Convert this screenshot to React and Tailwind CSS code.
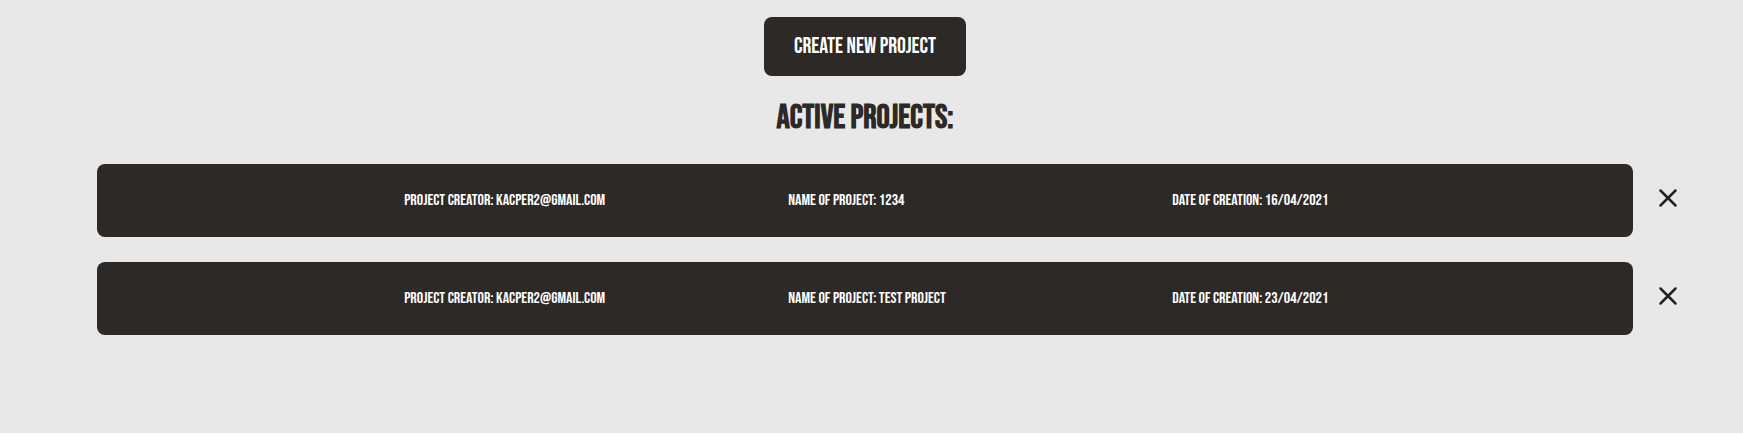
import { X } from "lucide-react";

const projects = [
  { creator: "kacper2@gmail.com", name: "1234", date: "16/04/2021" },
  { creator: "kacper2@gmail.com", name: "test project", date: "23/04/2021" },
];

function ProjectRow({ creator, name, date }) {
  return (
    <li className="flex items-center gap-5">
      <button
        type="button"
        className="grid min-w-0 flex-1 grid-cols-[4fr_5fr_5fr_6fr] items-center rounded-lg bg-[#2d2926] py-6 text-left text-base leading-[25px] text-white uppercase"
      >
        <span className="col-start-2">Project creator: {creator}</span>
        <span>Name of project: {name}</span>
        <span>Date of creation: {date}</span>
      </button>
      <button type="button" aria-label={`Delete project ${name}`} className="pb-[5px] text-[#222222]">
        <X className="size-[30px]" strokeWidth={2} />
      </button>
    </li>
  );
}

export default function App() {
  return (
    <main className="flex min-h-screen flex-col items-center border-b border-white bg-[#e8e8e8] pt-[17px] pr-[60px] pl-[97px] font-['Bebas_Neue',sans-serif]">
      <div className="flex w-full flex-col items-center pr-[50px]">
        <button
          type="button"
          className="rounded-lg bg-[#2d2926] px-[30px] py-4 text-[22px] leading-[27px] text-white uppercase"
        >
          Create new project
        </button>
        <h1 className="mt-[22px] text-[33px] leading-10 font-bold text-[#2d2926] uppercase">Active projects:</h1>
      </div>
      <ul className="mt-[26px] flex w-full flex-col gap-[25px]">
        {projects.map((project) => (
          <ProjectRow key={project.name} {...project} />
        ))}
      </ul>
    </main>
  );
}
